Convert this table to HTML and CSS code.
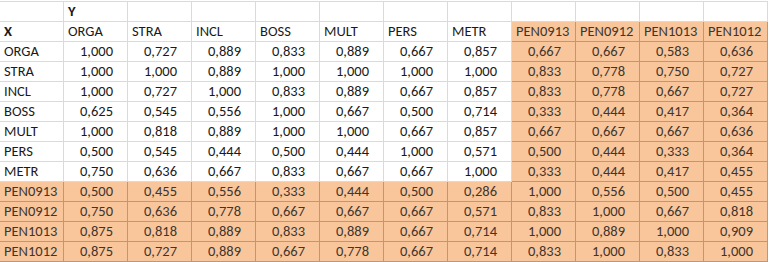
FILE: index.html
```html
<!DOCTYPE html>
<html>
<head>
<meta charset="utf-8">
<link rel="stylesheet" href="styles.css">
</head>
<body>
<table class="sheet">
<colgroup>
<col class="c"><col class="c"><col class="c"><col class="c"><col class="c"><col class="c"><col class="c"><col class="c"><col class="c"><col class="c"><col class="c"><col class="c">
</colgroup>
<tbody>
<tr><td></td><td class="h b">Y</td><td></td><td></td><td></td><td></td><td></td><td></td><td></td><td></td><td></td><td></td></tr>
<tr><td class="h b">X</td><td class="h">ORGA</td><td class="h">STRA</td><td class="h">INCL</td><td class="h">BOSS</td><td class="h">MULT</td><td class="h">PERS</td><td class="h">METR</td><td class="h o">PEN0913</td><td class="h o">PEN0912</td><td class="h o">PEN1013</td><td class="h o">PEN1012</td></tr>
<tr><td class="h">ORGA</td><td class="n">1,000</td><td class="n">0,727</td><td class="n">0,889</td><td class="n">0,833</td><td class="n">0,889</td><td class="n">0,667</td><td class="n">0,857</td><td class="n o">0,667</td><td class="n o">0,667</td><td class="n o">0,583</td><td class="n o">0,636</td></tr>
<tr><td class="h">STRA</td><td class="n">1,000</td><td class="n">1,000</td><td class="n">0,889</td><td class="n">1,000</td><td class="n">1,000</td><td class="n">1,000</td><td class="n">1,000</td><td class="n o">0,833</td><td class="n o">0,778</td><td class="n o">0,750</td><td class="n o">0,727</td></tr>
<tr><td class="h">INCL</td><td class="n">1,000</td><td class="n">0,727</td><td class="n">1,000</td><td class="n">0,833</td><td class="n">0,889</td><td class="n">0,667</td><td class="n">0,857</td><td class="n o">0,833</td><td class="n o">0,778</td><td class="n o">0,667</td><td class="n o">0,727</td></tr>
<tr><td class="h">BOSS</td><td class="n">0,625</td><td class="n">0,545</td><td class="n">0,556</td><td class="n">1,000</td><td class="n">0,667</td><td class="n">0,500</td><td class="n">0,714</td><td class="n o">0,333</td><td class="n o">0,444</td><td class="n o">0,417</td><td class="n o">0,364</td></tr>
<tr><td class="h">MULT</td><td class="n">1,000</td><td class="n">0,818</td><td class="n">0,889</td><td class="n">1,000</td><td class="n">1,000</td><td class="n">0,667</td><td class="n">0,857</td><td class="n o">0,667</td><td class="n o">0,667</td><td class="n o">0,667</td><td class="n o">0,636</td></tr>
<tr><td class="h">PERS</td><td class="n">0,500</td><td class="n">0,545</td><td class="n">0,444</td><td class="n">0,500</td><td class="n">0,444</td><td class="n">1,000</td><td class="n">0,571</td><td class="n o">0,500</td><td class="n o">0,444</td><td class="n o">0,333</td><td class="n o">0,364</td></tr>
<tr><td class="h">METR</td><td class="n">0,750</td><td class="n">0,636</td><td class="n">0,667</td><td class="n">0,833</td><td class="n">0,667</td><td class="n">0,667</td><td class="n">1,000</td><td class="n o">0,333</td><td class="n o">0,444</td><td class="n o">0,417</td><td class="n o">0,455</td></tr>
<tr><td class="h o">PEN0913</td><td class="n o">0,500</td><td class="n o">0,455</td><td class="n o">0,556</td><td class="n o">0,333</td><td class="n o">0,444</td><td class="n o">0,500</td><td class="n o">0,286</td><td class="n o">1,000</td><td class="n o">0,556</td><td class="n o">0,500</td><td class="n o">0,455</td></tr>
<tr><td class="h o">PEN0912</td><td class="n o">0,750</td><td class="n o">0,636</td><td class="n o">0,778</td><td class="n o">0,667</td><td class="n o">0,667</td><td class="n o">0,667</td><td class="n o">0,571</td><td class="n o">0,833</td><td class="n o">1,000</td><td class="n o">0,667</td><td class="n o">0,818</td></tr>
<tr><td class="h o">PEN1013</td><td class="n o">0,875</td><td class="n o">0,818</td><td class="n o">0,889</td><td class="n o">0,833</td><td class="n o">0,889</td><td class="n o">0,667</td><td class="n o">0,714</td><td class="n o">1,000</td><td class="n o">0,889</td><td class="n o">1,000</td><td class="n o">0,909</td></tr>
<tr><td class="h o">PEN1012</td><td class="n o">0,875</td><td class="n o">0,727</td><td class="n o">0,889</td><td class="n o">0,667</td><td class="n o">0,778</td><td class="n o">0,667</td><td class="n o">0,714</td><td class="n o">0,833</td><td class="n o">1,000</td><td class="n o">0,833</td><td class="n o">1,000</td></tr>
</tbody>
</table>
</body>
</html>
```

FILE: styles.css
```css
html, body {
  margin: 0;
  padding: 0;
  background: #ffffff;
}
body {
  font-family: "Carlito", "Liberation Sans", Arial, sans-serif;
  font-size: 14.5px;
  color: #1a1a1a;
}
.sheet {
  border-collapse: collapse;
  table-layout: fixed;
  width: 768px;
  margin: 1px 0 0 -1px;
}
.c {
  width: 64px;
}
.sheet td {
  height: 19px;
  padding: 0 0 0 4px;
  border: 1px solid #dadada;
  line-height: 19px;
  white-space: nowrap;
  overflow: hidden;
  box-sizing: border-box;
}
.sheet td.n {
  text-align: center;
  padding: 0 0 0 2px;
}
.sheet td.b {
  font-weight: bold;
}
.sheet td.o {
  background: #f9c59b;
  border-color: #ad9c8e;
  color: #40362e;
}
```
